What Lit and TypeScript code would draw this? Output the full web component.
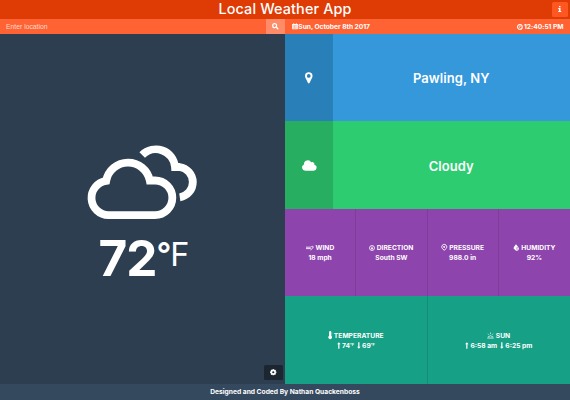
import { LitElement, html, css, svg } from "lit";
import { customElement } from "lit/decorators.js";

const icon = (name: string, viewBox: string, body: unknown) =>
  html`<svg class="icon ${name}" viewBox=${viewBox} aria-hidden="true">${body}</svg>`;

const icons = {
  info: icon("info", "0 0 4 7", svg`<path d="M1.1 0h1.8v1.5H1.1zM.3 2.4h2.6v3.3h.8V7H.3V5.7h.8v-2H.3z"/>`),
  search: icon("search", "0 0 14 14", svg`<circle cx="5.7" cy="5.7" r="4.2" fill="none" stroke="currentColor" stroke-width="2.6"/><path d="M8.8 8.8l3.8 3.8" stroke="currentColor" stroke-width="3" stroke-linecap="round"/>`),
  calendar: icon("calendar", "0 0 14 14", svg`<path fill-rule="evenodd" d="M1 2h2V0h2v2h4V0h2v2h2q1 0 1 1v10q0 1-1 1H1q-1 0-1-1V3q0-1 1-1zM1.6 5.5v1.6h2V5.5zm3.2 0v1.6h2V5.5zm3.2 0v1.6h2V5.5zm3.2 0v1.6h1.3V5.5zM1.6 8.5v1.5h2V8.5zm3.2 0v1.5h2V8.5zm3.2 0v1.5h2V8.5zm3.2 0v1.5h1.3V8.5zM1.6 11.3v1.4h2v-1.4zm3.2 0v1.4h2v-1.4zm3.2 0v1.4h2v-1.4zm3.2 0v1.4h1.3v-1.4z"/>`),
  clock: icon("clock", "0 0 14 14", svg`<circle cx="7" cy="7" r="5.7" fill="none" stroke="currentColor" stroke-width="2.6"/><path d="M7.3 3v4.5H4.5" fill="none" stroke="currentColor" stroke-width="2"/>`),
  pin: icon("pin", "0 0 8 12", svg`<path fill-rule="evenodd" d="M4 0a4 4 0 0 1 4 4c0 1-.3 1.6-.6 2.2L4.8 11.5q-.8 1-1.6 0L.6 6.2C.3 5.6 0 5 0 4a4 4 0 0 1 4-4zm0 2a2 2 0 1 0 0 4 2 2 0 0 0 0-4z"/>`),
  cloud: icon("cloud", "0 0 15 11", svg`<path d="M3.4 11A3.4 3.4 0 0 1 2 4.5 4 4 0 0 1 9.5 2.3a2.3 2.3 0 0 1 3.3 2.6A3.1 3.1 0 0 1 12 11z"/>`),
  wind: icon("wind", "0 0 9 6", svg`<path d="M0 2.1h5M0 3.7h5q1 0 1 .8t-.8.8M5 2.1q1.2 0 1.2-1M6.5 3.5q1.6 0 1.5-1.5t-1-.9" fill="none" stroke="currentColor" stroke-width=".95"/>`),
  direction: icon("direction", "0 0 8 8", svg`<circle cx="4" cy="4" r="3.3" fill="none" stroke="currentColor" stroke-width="1.1"/><path d="M4 1.2L5.7 6.3 4 5.4 2.3 6.3z"/>`),
  pressure: icon("pressure", "0 0 8 9", svg`<path d="M2.6 6.6A3.2 3.2 0 1 1 5.4 6.6L4 8.2z" fill="none" stroke="currentColor" stroke-width="1.2"/><path d="M2.3 3l1.4 1L5.5 2.4" fill="none" stroke="currentColor" stroke-width="1"/><circle cx="4" cy="4.2" r=".9"/>`),
  humidity: icon("humidity", "0 0 8 9", svg`<path fill-rule="evenodd" d="M3.6.2C5.5 2.700 7.400 4 7.400 6.100a2.900 2.900 0 0 1-5.600.8A2 2 0 0 1 .6 5C.6 3.500 2.600 2.300 3.600.2zM3.700 6.800l.6.400 2-2.700-.6-.4zM3.500 4.400v.8h.8v-.8zM5.500 6.400v.8h.8v-.8z"/>`),
  thermometer: icon("thermometer", "0 0 5 9", svg`<path d="M1.2 1.3a1.2 1.2 0 0 1 2.4 0v4a2.1 2.1 0 1 1-2.4 0z"/><path d="M3.8 1.4h1M3.8 3h1M3.8 4.6h1" stroke="currentColor" stroke-width=".5"/>`),
  sun: icon("sun", "0 0 8 8", svg`<path d="M.3 6.9h7.4M1 5.5h1.2a1.9 1.9 0 0 1 3.6 0H7M4 .6v1.5M1.1 2l1 1.1M6.900 2l-1 1.1" fill="none" stroke="currentColor" stroke-width=".85"/>`),
  up: icon("arrow", "0 0 4 8", svg`<path d="M2 .2l2 2.5H2.7v5.1H1.3V2.7H0z"/>`),
  down: icon("arrow", "0 0 4 8", svg`<path d="M2 7.8L0 5.3h1.3V.2h1.4v5.1H4z"/>`),
  gear: icon("gear", "0 0 14 14", svg`<circle cx="7" cy="7" r="4" fill="none" stroke="currentColor" stroke-width="3.4"/><path d="M7 .3v2M7 11.7v2M.3 7h2M11.7 7h2M2.3 2.3l1.4 1.4M10.3 10.3l1.4 1.4M2.3 11.7l1.4-1.4M10.3 3.7l1.4-1.4" stroke="currentColor" stroke-width="2.8"/>`),
  cloudy: icon("cloudy", "0 0 112 76", svg`<g fill="none" stroke="currentColor" stroke-width="7.8"><path d="M21.5 71.200a17.300 17.300 0 0 1-2.300-34.400A22.200 22.200 0 0 1 62.800 36.500H68a17.350 17.350 0 0 1 0 34.700z"/><path d="M55.200 11A19.200 19.200 0 0 1 88 23h4.500a15.300 15.300 0 0 1 .3 30.300"/></g>`),
};

@customElement("app-root")
export class AppRoot extends LitElement {
  static styles = css`
    :host {
      display: grid;
      grid-template-rows: 18.5px 15.3px 350px 16.2px;
      width: 570px;
      height: 400px;
      overflow: hidden;
      color: #fff;
      background: #2c3e50;
      font-family: Inter, "Open Sans", sans-serif;
      font-size: 6.7px;
      font-weight: 700;
      line-height: 10px;
    }
    * { box-sizing: border-box; }
    .icon { display: block; flex: none; fill: currentColor; overflow: visible; }
    header {
      display: grid;
      grid-template-columns: 1fr auto 1fr;
      align-items: center;
      background: #df3b05;
    }
    h1 { grid-column: 2; margin: 0; font-size: 14.4px; font-weight: 500; line-height: 18px; letter-spacing: .14px; }
    button { display: flex; align-items: center; justify-content: center; border: 0; padding: 0; color: #fff; }
    .about { justify-self: end; width: 16px; height: 15px; margin-right: 2px; border-radius: 1.5px; background: #ff5722; }
    .info { width: 3.5px; height: 6px; }
    .bar { display: grid; grid-template-columns: 285px 285px; background: #ff6333; }
    .find { display: flex; align-items: center; justify-content: space-between; }
    .hint { padding-left: 6px; font: 400 6.8px/15px "Liberation Sans", sans-serif; color: #ffdacd; }
    .go { width: 19.5px; height: 100%; background: #ff8c69; }
    .search { width: 6.5px; height: 6.5px; }
    .when { display: flex; align-items: center; justify-content: space-between; padding: 1px 6.5px 0; }
    .when span { display: flex; align-items: center; gap: .8px; }
    .when time { padding-top: 1px; letter-spacing: -.04px; }
    .calendar { width: 6px; height: 6.3px; }
    .clock { width: 5.8px; height: 5.8px; }
    main { display: grid; grid-template-columns: 285px 285px; }
    .now { display: grid; grid-template-rows: 110px 1fr 19px; justify-items: center; }
    .cloudy { width: 112px; height: 76px; }
    .visual { grid-row: 2; display: flex; flex-direction: column; align-items: center; }
    .reading { display: flex; align-items: flex-start; padding-left: 2px; margin-top: 8px; }
    .value { font-size: 49.5px; font-weight: 700; line-height: 60px; letter-spacing: -1px; }
    .unit { display: flex; font-size: 32.5px; font-weight: 400; line-height: 39px; padding-top: 7px; letter-spacing: -1px; }
    .unit b { font-weight: 600; }
    .settings { grid-row: 3; justify-self: end; width: 19px; height: 15px; margin-right: 2px; border-radius: 1.5px; background: #1b2631; }
    .gear { width: 6.5px; height: 6.5px; }
    .panels { display: grid; grid-template-rows: repeat(4, 87.5px); }
    .wide { display: grid; grid-template-columns: 47.5px 1fr; font-size: 13px; font-weight: 600; letter-spacing: .07px; }
    .wide > * { display: flex; align-items: center; justify-content: center; }
    .place { background: #3498db; }
    .place .tag { background: #2980b9; }
    .sky { background: #2ecc71; }
    .sky > :last-child { padding-top: 1px; }
    .sky .tag { background: #27ae60; }
    .pin { width: 7.5px; height: 11.5px; }
    .cloud { width: 14.5px; height: 10.7px; }
    .row { display: grid; grid-auto-flow: column; grid-auto-columns: 1fr; }
    .metrics { background: #8e44ad; }
    .extremes { background: #16a085; }
    .cell { display: flex; flex-direction: column; align-items: center; justify-content: center; padding-top: 1.5px; border-right: 1px solid rgba(0, 0, 0, .1); }
    .line { display: flex; align-items: center; justify-content: center; gap: 1.5px; white-space: nowrap; }
    .line .icon { margin-bottom: 1px; }
    .cell:last-child { border-right: 0; }
    .wind { width: 8px; height: 6px; }
    .direction { width: 6px; height: 6px; }
    .pressure, .humidity { width: 6.5px; height: 7px; }
    .thermometer { width: 4.5px; height: 8px; }
    .sun { width: 7px; height: 7px; }
    .arrow { width: 3.7px; height: 7px; }
    .arrow:nth-of-type(2) { margin-left: 1.5px; }
    sup { font-size: 3.8px; line-height: 0; vertical-align: 2px; }
    footer { display: flex; align-items: center; justify-content: center; padding-top: .4px; background: #34495e; }
  `;

  private metric(glyph: unknown, label: string, value: unknown) {
    return html`<div class="cell">
      <div class="line">${glyph}<span>${label}</span></div>
      <div class="line">${value}</div>
    </div>`;
  }

  render() {
    return html`
      <header><h1>Local Weather App</h1><button class="about" aria-label="About">${icons.info}</button></header>
      <div class="bar">
        <div class="find"><span class="hint">Enter location</span><button class="go" aria-label="Search">${icons.search}</button></div>
        <div class="when">
          <span>${icons.calendar}<time>Sun, October 8th 2017</time></span>
          <span>${icons.clock}<time>12:40:51 PM</time></span>
        </div>
      </div>
      <main>
        <section class="now">
          <div class="visual">
            ${icons.cloudy}
            <div class="reading"><span class="value">72</span><span class="unit"><b>°</b><span>F</span></span></div>
          </div>
          <button class="settings" aria-label="Settings">${icons.gear}</button>
        </section>
        <section class="panels">
          <div class="wide place"><div class="tag">${icons.pin}</div><div>Pawling, NY</div></div>
          <div class="wide sky"><div class="tag">${icons.cloud}</div><div>Cloudy</div></div>
          <div class="row metrics">
            ${this.metric(icons.wind, "WIND", "18 mph")}
            ${this.metric(icons.direction, "DIRECTION", "South SW")}
            ${this.metric(icons.pressure, "PRESSURE", "988.0 in")}
            ${this.metric(icons.humidity, "HUMIDITY", "92%")}
          </div>
          <div class="row extremes">
            ${this.metric(icons.thermometer, "TEMPERATURE", html`${icons.up}<span>74<sup>°F</sup></span>${icons.down}<span>69<sup>°F</sup></span>`)}
            ${this.metric(icons.sun, "SUN", html`${icons.up}<span>6:58 am</span>${icons.down}<span>6:25 pm</span>`)}
          </div>
        </section>
      </main>
      <footer>Designed and Coded By Nathan Quackenboss</footer>
    `;
  }
}
